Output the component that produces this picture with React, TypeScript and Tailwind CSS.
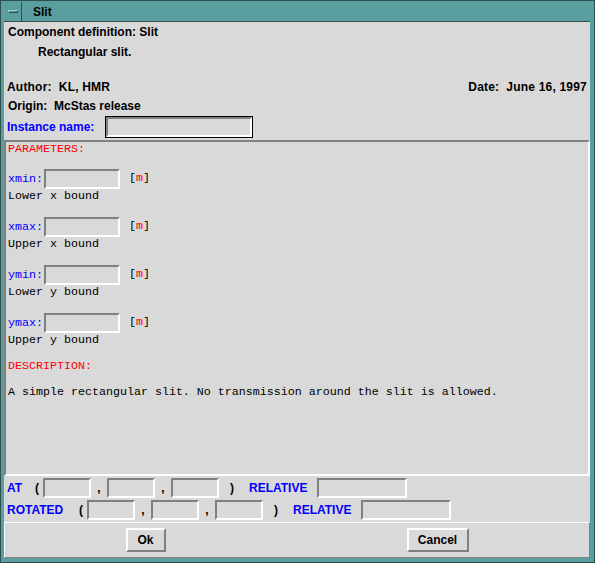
import React from "react";

const sans = "font-['Liberation_Sans',Arial,sans-serif] font-bold text-[12px]";
const mono = "font-['Liberation_Mono','Courier_New',monospace] text-[11.67px]";

function Sunken({ className = "" }: { className?: string }) {
  return (
    <div
      className={`border-2 border-t-[#808080] border-l-[#808080] border-b-white border-r-white bg-[#d9d9d9] ${className}`}
    />
  );
}

function Param({ name, desc }: { name: string; desc: string }) {
  return (
    <div className="mt-[14px]">
      <div className="flex items-center h-[20px]">
        <span className="text-[#0000ff] w-[36px] leading-[20px]">{name}:</span>
        <Sunken className="w-[76px] h-[20px]" />
        <span className="ml-[9px]">
          [<span className="text-[#ff0000]">m</span>]
        </span>
      </div>
      <div className="h-[14px] leading-[14px] text-black">{desc}</div>
    </div>
  );
}

function Button({ label, className = "" }: { label: string; className?: string }) {
  return (
    <div
      className={`h-[24px] flex items-center justify-center border-2 border-t-white border-l-white border-b-[#808080] border-r-[#808080] bg-[#d9d9d9] ${className}`}
    >
      {label}
    </div>
  );
}

function CoordRow({ label, labelW }: { label: string; labelW: string }) {
  return (
    <div className="flex items-center h-[20px] pl-[3px]">
      <span className={`text-[#0000ff] ${labelW}`}>{label}</span>
      <span className="w-[8px]">(</span>
      <Sunken className="w-[48px] h-[20px]" />
      <span className="w-[16px] text-center">,</span>
      <Sunken className="w-[48px] h-[20px]" />
      <span className="w-[16px] text-center">,</span>
      <Sunken className="w-[48px] h-[20px]" />
      <span className="w-[30px] pl-[11px]">)</span>
      <span className="text-[#0000ff] w-[68px]">RELATIVE</span>
      <Sunken className="w-[90px] h-[20px]" />
    </div>
  );
}

export default function App() {
  return (
    <div className={`w-[595px] h-[563px] bg-[#5a9ea0] border border-[#2f4f4f] flex flex-col pt-[1px] pl-[3px] pr-[4px] pb-[4px] text-black ${sans}`}>
      {/* Title bar */}
      <div className="flex h-[20px]">
        <div className="w-[18px] border-r border-b border-[#2f4f4f] flex items-center justify-center">
          <div className="w-[10px] h-[3px] border border-t-[#9fd0d2] border-l-[#9fd0d2] border-b-[#2f4f4f] border-r-[#2f4f4f]" />
        </div>
        <div className="flex-1 border-b border-[#2f4f4f] flex items-center pl-[11px] leading-none">
          Slit
        </div>
      </div>

      {/* Body */}
      <div className="flex-1 bg-[#d9d9d9] flex flex-col">
        <div className="mt-[3px] h-[14px] leading-[14px] pl-[4px]">Component definition: Slit</div>
        <div className="mt-[6px] h-[14px] leading-[14px] pl-[34px]">Rectangular slit.</div>
        <div className="mt-[21px] h-[14px] leading-[14px] pl-[3px] pr-[3px] flex justify-between whitespace-pre tracking-[0.2px]">
          <span>Author:  KL, HMR</span>
          <span>Date:  June 16, 1997</span>
        </div>
        <div className="mt-[5px] h-[14px] leading-[14px] pl-[4px] whitespace-pre">Origin:  McStas release</div>
        <div className="mt-[3px] h-[22px] flex items-center pl-[3px]">
          <span className="w-[98px] text-[#0000ff]">Instance name:</span>
          <div className="border border-black">
            <Sunken className="w-[146px] h-[20px]" />
          </div>
        </div>

        {/* Scrolled parameter pane */}
        <div className={`mt-[2px] h-[336px] border-2 border-t-[#808080] border-l-[#808080] border-b-white border-r-white pl-[2px] font-normal ${mono}`}>
          <div className="h-[14px] leading-[14px] text-[#ff0000]">PARAMETERS:</div>
          <div className="-mt-[1px]">
            <Param name="xmin" desc="Lower x bound" />
            <Param name="xmax" desc="Upper x bound" />
            <Param name="ymin" desc="Lower y bound" />
            <Param name="ymax" desc="Upper y bound" />
          </div>
          <div className="mt-[12px] h-[14px] leading-[14px] text-[#ff0000]">DESCRIPTION:</div>
          <div className="mt-[12px] h-[14px] leading-[14px] whitespace-pre">
            A simple rectangular slit. No transmission around the slit is allowed.
          </div>
        </div>

        {/* Position / rotation rows */}
        <div className="mt-[2px] flex flex-col gap-[2px]">
          <CoordRow label="AT" labelW="w-[28px]" />
          <CoordRow label="ROTATED" labelW="w-[72px]" />
        </div>

        {/* Buttons */}
        <div className="mt-[2px] flex-1 border border-t-white border-l-white border-b-[#808080] border-r-[#808080] flex justify-around items-start pt-[5px]">
          <Button label="Ok" className="w-[40px]" />
          <Button label="Cancel" className="w-[62px]" />
        </div>
      </div>
    </div>
  );
}
